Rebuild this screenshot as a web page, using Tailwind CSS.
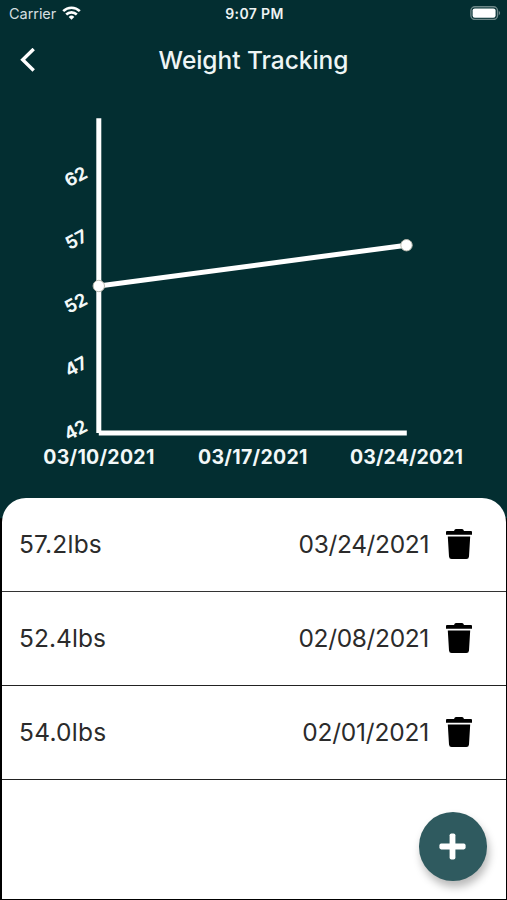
<!DOCTYPE html>
<html lang="en">
  <head>
    <meta charset="UTF-8" />
    <meta name="viewport" content="width=device-width, initial-scale=1.0" />
    <title>Weight Tracking</title>
    <script src="https://cdn.jsdelivr.net/npm/@tailwindcss/browser@4"></script>
    <style>
      body {
        font-family: 'Inter', sans-serif;
      }
    </style>
  </head>
  <body class="bg-[#032e31]">
    <div class="w-[507px] h-[900px] flex flex-col overflow-hidden relative">
      <!-- Status bar -->
      <div class="h-7 shrink-0 grid grid-cols-3 items-center pl-[9px] pr-[6px] text-white">
        <div class="flex items-center gap-[6px] -mt-px">
          <span class="text-[14.5px] tracking-[-0.05px] text-[#d5dfe0]">Carrier</span>
          <svg class="w-[19px] h-[14px] -mt-0.5" viewBox="0 0 19 14" fill="none" stroke="#fff" stroke-width="2.6">
            <path d="M1.2 5.1a11.8 11.8 0 0 1 16.6 0" />
            <path d="M4.2 8.5a7.6 7.6 0 0 1 10.6 0" />
            <path d="M9.5 13.8 6.7 10.9a4 4 0 0 1 5.6 0Z" fill="#fff" stroke="none" />
          </svg>
        </div>
        <span class="text-center text-[14px] font-semibold tracking-[0.35px] text-[#eef3f3] -ml-px -mt-0.5">9:07 PM</span>
        <svg class="w-[31px] h-[14px] justify-self-end -mt-0.5" viewBox="0 0 31 14">
          <rect x="0.9" y="0.7" width="26.6" height="12.8" rx="4" fill="none" stroke="#6d8788" stroke-width="1.4" />
          <rect x="2.6" y="2.4" width="23" height="9.4" rx="2.2" fill="#fff" />
          <path d="M28.8 5v4.2c1.8-.7 1.8-3.5 0-4.2Z" fill="#6d8788" />
        </svg>
      </div>

      <!-- Header -->
      <header class="h-[64px] shrink-0 grid grid-cols-[80px_1fr_80px] items-center">
        <svg class="ml-5 w-4 h-6" viewBox="0 0 16 24" fill="none" stroke="#fff" stroke-width="3.4">
          <path d="M13.7 1 2.7 11.7l11 10.8" />
        </svg>
        <h1 class="text-center text-[24.5px] font-medium tracking-[-0.05px] text-[#eef5f5]">Weight Tracking</h1>
      </header>

      <!-- Chart -->
      <svg class="w-[507px] h-[406px] shrink-0" viewBox="0 92 507 406">
        <g stroke="#fff" stroke-width="5">
          <path d="M98.8 118.3V433" />
          <path d="M98.8 433H406.8" />
          <path d="M98.8 286 406.5 245.2" />
        </g>
        <g fill="#fff" stroke="#b9b9ae" stroke-width="1">
          <circle cx="98.8" cy="286" r="5.7" />
          <circle cx="406.5" cy="245.2" r="5.7" />
        </g>
        <g fill="#f2f8f8" font-size="18" font-weight="700" text-anchor="end" letter-spacing="-0.4">
          <text transform="translate(88.3 177) rotate(-28)">62</text>
          <text transform="translate(88.3 240.3) rotate(-28)">57</text>
          <text transform="translate(88.3 303.7) rotate(-28)">52</text>
          <text transform="translate(88.3 367) rotate(-28)">47</text>
          <text transform="translate(88.3 430.3) rotate(-28)">42</text>
        </g>
        <g fill="#f2f8f8" font-size="19.5" font-weight="700" text-anchor="middle">
          <text x="98.8" y="463.7" textLength="111">03/10/2021</text>
          <text x="252.7" y="463.7" textLength="109.5">03/17/2021</text>
          <text x="406.5" y="463.7" textLength="113">03/24/2021</text>
        </g>
      </svg>

      <!-- Entries -->
      <main class="flex-1 bg-linear-to-b from-[#032e31] from-[20px] to-black to-[21px] pl-[2px] pr-[1.5px] pb-px">
        <ul class="h-full bg-white rounded-t-[24px] text-[24.5px] text-[#2b2b2b]">
          <li class="h-[93.5px] flex items-center pl-[17px] pr-[33.5px] border-b-[1.5px] border-[#333]">
            <span class="tracking-[0.2px]">57.2lbs</span>
            <span class="ml-auto tracking-[-0.35px]">03/24/2021</span>
            <svg class="ml-[17px] w-[26px] h-[30px]" viewBox="0 0 26 30">
              <path d="M0 2.9Q0 1.9 1 1.9H8L8.8.6Q9.2 0 10 0H16Q16.8 0 17.2.6L18 1.9H25Q26 1.9 26 2.9V5.7H0ZM1.8 7.6H24.2L23 27.5Q22.8 30 20.4 30H5.6Q3.2 30 3 27.5Z" />
            </svg>
          </li>
          <li class="h-[94px] flex items-center pl-[17px] pr-[33.5px] border-b-[1.5px] border-[#222]">
            <span class="tracking-[0.05px]">52.4lbs</span>
            <span class="ml-auto tracking-[-0.35px]">02/08/2021</span>
            <svg class="ml-[17px] w-[26px] h-[30px]" viewBox="0 0 26 30">
              <path d="M0 2.9Q0 1.9 1 1.9H8L8.8.6Q9.2 0 10 0H16Q16.8 0 17.2.6L18 1.9H25Q26 1.9 26 2.9V5.7H0ZM1.8 7.6H24.2L23 27.5Q22.8 30 20.4 30H5.6Q3.2 30 3 27.5Z" />
            </svg>
          </li>
          <li class="h-[94px] flex items-center pl-[17px] pr-[33.5px] border-b-[1.5px] border-[#222]">
            <span class="tracking-[0.25px]">54.0lbs</span>
            <span class="ml-auto tracking-[-0.2px]">02/01/2021</span>
            <svg class="ml-[17px] w-[26px] h-[30px]" viewBox="0 0 26 30">
              <path d="M0 2.9Q0 1.9 1 1.9H8L8.8.6Q9.2 0 10 0H16Q16.8 0 17.2.6L18 1.9H25Q26 1.9 26 2.9V5.7H0ZM1.8 7.6H24.2L23 27.5Q22.8 30 20.4 30H5.6Q3.2 30 3 27.5Z" />
            </svg>
          </li>
        </ul>
      </main>

      <!-- Add button -->
      <button class="absolute right-5 bottom-[19.5px] size-[68.5px] rounded-full bg-[#2f5a5f] flex items-center justify-center shadow-[2px_6px_9px_rgba(0,0,0,0.28)]" aria-label="Add weight">
        <svg class="size-[27px]" viewBox="0 0 27 27" fill="#fff">
          <rect x="10.6" y="0.4" width="5.8" height="26.2" rx="1.8" />
          <rect x="0.4" y="10.6" width="26.2" height="5.8" rx="1.8" />
        </svg>
      </button>
    </div>
  </body>
</html>
